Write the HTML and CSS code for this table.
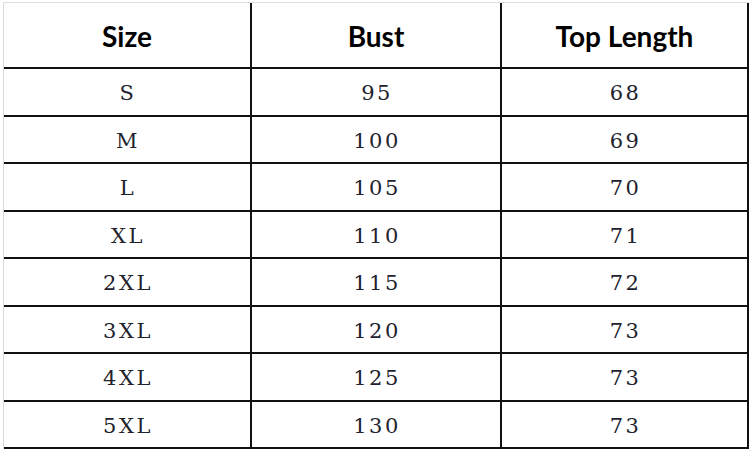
FILE: index.html
```html
<!DOCTYPE html>
<html>
<head>
<meta charset="utf-8">
<link rel="stylesheet" href="styles.css">
</head>
<body>
<div class="chart">
  <div class="cell head">Size</div>
  <div class="cell head">Bust</div>
  <div class="cell head">Top Length</div>
  <div class="cell">S</div><div class="cell">95</div><div class="cell">68</div>
  <div class="cell">M</div><div class="cell">100</div><div class="cell">69</div>
  <div class="cell">L</div><div class="cell">105</div><div class="cell">70</div>
  <div class="cell">XL</div><div class="cell">110</div><div class="cell">71</div>
  <div class="cell">2XL</div><div class="cell">115</div><div class="cell">72</div>
  <div class="cell">3XL</div><div class="cell">120</div><div class="cell">73</div>
  <div class="cell">4XL</div><div class="cell">125</div><div class="cell">73</div>
  <div class="cell">5XL</div><div class="cell">130</div><div class="cell">73</div>
</div>
</body>
</html>
```

FILE: styles.css
```css
html, body {
  margin: 0;
  padding: 0;
  background: #fff;
}
body {
  padding: 2px 0 0 3px;
  width: 750px;
  height: 450px;
  box-sizing: border-box;
  overflow: hidden;
}
.chart {
  display: grid;
  grid-template-columns: 248px 250px 247px;
  grid-template-rows: 66px repeat(8, 47.5px);
  border-top: 1px solid #dcdcdc;
  border-left: 1px solid #dcdcdc;
  width: max-content;
}
.cell {
  display: flex;
  align-items: center;
  justify-content: center;
  box-sizing: border-box;
  border-right: 2px solid #111;
  border-bottom: 2px solid #111;
  font-family: "DejaVu Serif", "Liberation Serif", serif;
  font-size: 21px;
  letter-spacing: 2.5px;
  padding-left: 2px;
  padding-top: 3px;
  color: #22222c;
}
.head {
  font-family: Lato, "Liberation Sans", sans-serif;
  font-weight: 700;
  font-size: 28px;
  letter-spacing: 0;
  padding-left: 0;
  padding-top: 2px;
  color: #000;
}
```
